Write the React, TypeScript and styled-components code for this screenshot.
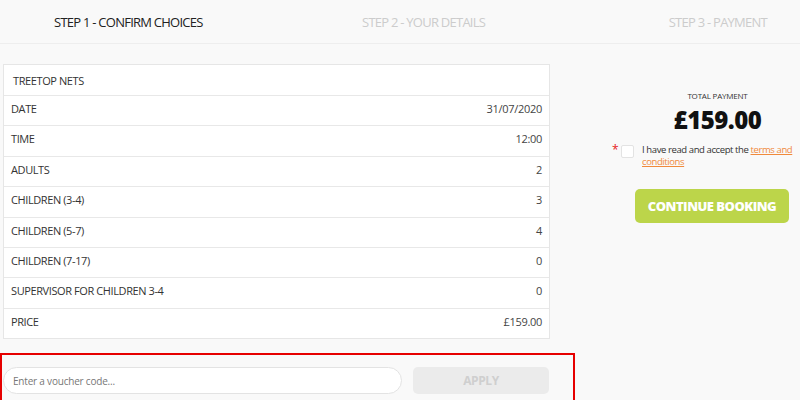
import React from "react";
import styled, { createGlobalStyle } from "styled-components";

const Global = createGlobalStyle`
  html, body { margin: 0; padding: 0; background: #f9f9f9; }
  body { font-family: "Open Sans", "Noto Sans", sans-serif; color: #333; letter-spacing: -0.3px; }
  * { box-sizing: border-box; }
`;

const Page = styled.div`
  width: 800px;
  height: 400px;
  overflow: hidden;
  background: #f9f9f9;
`;

const Steps = styled.nav`
  height: 44px;
  display: grid;
  grid-template-columns: 308px 307px 185px;
  align-items: center;
  border-bottom: 1px solid #eeeeee;
`;

const Step = styled.div<{ $active?: boolean; $align?: string }>`
  font-size: 13px;
  letter-spacing: -0.75px;
  text-transform: uppercase;
  color: ${(p) => (p.$active ? "#222" : "#cccccc")};
  padding-left: ${(p) => (p.$align === "right" ? "0" : "54px")};
  text-align: ${(p) => p.$align || "left"};
  padding-right: ${(p) => (p.$align === "right" ? "33px" : "0")};
`;

const Body = styled.div`
  display: flex;
  padding-top: 20px;
`;

const LeftCol = styled.div`
  width: 575px;
  display: flex;
  flex-direction: column;
`;

const Table = styled.div`
  margin-left: 3px;
  width: 547px;
  background: #fff;
  border: 1px solid #e6e6e6;
`;

const Row = styled.div<{ $head?: boolean }>`
  height: ${(p) => (p.$head ? "30px" : "30.4px")};
  display: flex;
  justify-content: space-between;
  align-items: flex-start;
  padding: ${(p) => (p.$head ? "8px 8px 0 9px" : "5px 7px 0 7px")};
  border-top: ${(p) => (p.$head ? "none" : "1px solid #e8e8e8")};
  font-size: 11px;
  color: #333;
`;

const Label = styled.span`
  text-transform: uppercase;
  letter-spacing: -0.4px;
`;

const Value = styled.span`
  color: #444;
`;

const Voucher = styled.div`
  margin-top: 14px;
  height: 48px;
  border: 2px solid #e60000;
  border-bottom: none;
  display: flex;
  align-items: flex-start;
  padding: 12px 24px 0 1px;
  gap: 11px;
`;

const VoucherInput = styled.input`
  flex: 0 0 399px;
  height: 27px;
  border-radius: 14px;
  border: 1px solid #e3e3e3;
  background: #fff;
  padding: 0 9px;
  font-family: inherit;
  font-size: 10px;
  letter-spacing: -0.2px;
  color: #333;
  outline: none;
  &::placeholder { color: #777; }
`;

const ApplyButton = styled.button`
  flex: 1;
  height: 27px;
  border: none;
  border-radius: 5px;
  background: #ebebeb;
  color: #cfcfcf;
  font-family: inherit;
  font-weight: 700;
  font-size: 12px;
  letter-spacing: -0.4px;
  text-transform: uppercase;
`;

const RightCol = styled.div`
  flex: 1;
  display: flex;
  flex-direction: column;
  align-items: center;
  padding-top: 26px;
  padding-left: 60px;
`;

const TotalLabel = styled.div`
  font-size: 8px;
  text-transform: uppercase;
  color: #333;
  letter-spacing: -0.2px;
`;

const Total = styled.div`
  font-size: 24px;
  font-weight: 800;
  letter-spacing: -0.5px;
  color: #111;
  margin-top: 5px;
  line-height: 28px;
`;

const Terms = styled.label`
  margin-top: 10px;
  margin-left: -25px;
  display: flex;
  align-items: flex-start;
  font-size: 9.5px;
  letter-spacing: -0.4px;
  line-height: 12px;
  color: #333;
  width: 186px;
`;

const Star = styled.span`
  color: #e62020;
  font-size: 12px;
  line-height: 12px;
  flex: 0 0 9px;
`;

const Box = styled.span`
  width: 13px;
  height: 13px;
  flex: 0 0 13px;
  background: #fff;
  border: 1px solid #e3e3e3;
  border-radius: 2px;
  margin: 1px 8px 0 0;
`;

const Link = styled.a`
  color: #f08a3c;
  text-decoration: underline;
`;

const Continue = styled.button`
  margin-top: 21px;
  width: 154px;
  height: 34px;
  margin-left: -11px;
  border: none;
  border-radius: 5px;
  background: #bcd54a;
  color: #fff;
  font-family: inherit;
  font-weight: 800;
  font-size: 13px;
  letter-spacing: -0.5px;
  text-transform: uppercase;
`;

const rows: [string, string][] = [
  ["Date", "31/07/2020"],
  ["Time", "12:00"],
  ["Adults", "2"],
  ["Children (3-4)", "3"],
  ["Children (5-7)", "4"],
  ["Children (7-17)", "0"],
  ["Supervisor for children 3-4", "0"],
  ["Price", "£159.00"],
];

export default function App() {
  return (
    <Page>
      <Global />
      <Steps>
        <Step $active>Step 1 - Confirm choices</Step>
        <Step>Step 2 - Your details</Step>
        <Step $align="right">Step 3 - Payment</Step>
      </Steps>
      <Body>
        <LeftCol>
          <Table>
            <Row $head>
              <Label>Treetop Nets</Label>
            </Row>
            {rows.map(([l, v]) => (
              <Row key={l}>
                <Label>{l}</Label>
                <Value>{v}</Value>
              </Row>
            ))}
          </Table>
          <Voucher>
            <VoucherInput placeholder="Enter a voucher code..." />
            <ApplyButton>Apply</ApplyButton>
          </Voucher>
        </LeftCol>
        <RightCol>
          <TotalLabel>Total payment</TotalLabel>
          <Total>£159.00</Total>
          <Terms>
            <Star>*</Star>
            <Box />
            <span>
              I have read and accept the <Link>terms and conditions</Link>
            </span>
          </Terms>
          <Continue>Continue booking</Continue>
        </RightCol>
      </Body>
    </Page>
  );
}
